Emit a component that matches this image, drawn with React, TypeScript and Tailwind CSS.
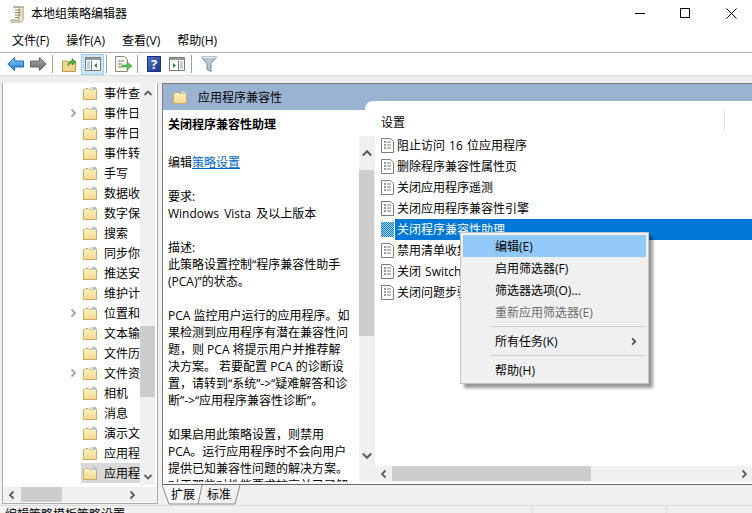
import React from "react";

const font = { fontFamily: '"Open Sans","Noto Sans CJK SC",sans-serif' };

function Folder({ className = "" }: { className?: string }) {
  return (
    <svg width="14" height="13" viewBox="0 0 14 13" className={className + " shrink-0"}>
      <defs>
        <linearGradient id="fg" x1="0" y1="0" x2="0" y2="1">
          <stop offset="0" stopColor="#fdf3c4" />
          <stop offset="1" stopColor="#f3d990" />
        </linearGradient>
      </defs>
      <path d="M.5 2.500h1l1-1h3l1 1h7v10H.5z" fill="url(#fg)" stroke="#c9aa68" />
      <path d="M8.500 .5h4.500v2H8.500z" fill="#fff" stroke="#c9c9c0" />
      <path d="M10 1h2.500v1H10z" fill="#6db3e8" />
    </svg>
  );
}

function Chev({ dir, color = "#5f5f5f", size = 10 }: { dir: "u" | "d" | "l" | "r"; color?: string; size?: number }) {
  const d = { u: "M1.500 7 5 3.500 8.500 7", d: "M1.500 3 5 6.500 8.500 3", l: "M6.500 1.500 3 5l3.500 3.500", r: "M3.500 1.500 7 5 3.500 8.500" }[dir];
  return (
    <svg width={size} height={size} viewBox="0 0 10 10" className="shrink-0">
      <path d={d} fill="none" stroke={color} strokeWidth="1.800" />
    </svg>
  );
}

function PolicyIcon({ selected = false }: { selected?: boolean }) {
  if (selected) {
    return (
      <svg width="13" height="15" viewBox="0 0 13 15" className="shrink-0">
        <defs>
          <pattern id="dith" width="2" height="2" patternUnits="userSpaceOnUse">
            <rect width="2" height="2" fill="#0078d7" />
            <rect width="1" height="1" fill="#b4d6f4" />
            <rect x="1" y="1" width="1" height="1" fill="#b4d6f4" />
          </pattern>
        </defs>
        <rect width="13" height="15" fill="url(#dith)" />
      </svg>
    );
  }
  return (
    <svg width="13" height="15" viewBox="0 0 13 15" className="shrink-0">
      <path d="M.5.500h9l3 3v11H.5z" fill="#fff" stroke="#7c7c7c" />
      <path d="M3 4h2M3 7h2M3 10h2" stroke="#333" strokeWidth="1.200" />
      <path d="M6 4h4M6 7h4M6 10h4" stroke="#808080" />
    </svg>
  );
}

function Toolbar() {
  const Sep = ({ ml }: { ml: string }) => <div className={`w-px h-[18px] bg-[#a0a0a0] ${ml}`} />;
  return (
    <div className="h-[22px] flex items-center bg-white">
      <svg width="17" height="14" viewBox="0 0 17 14" className="ml-[7px]">
        <defs>
          <linearGradient id="bk" x1="0" y1="0" x2="0" y2="1">
            <stop offset="0" stopColor="#8fd6fb" />
            <stop offset="1" stopColor="#1473d0" />
          </linearGradient>
        </defs>
        <path d="M7.500.500.800 7l6.700 6.500V10h9V4h-9z" fill="url(#bk)" stroke="#1f6fb8" />
      </svg>
      <svg width="17" height="14" viewBox="0 0 17 14" className="ml-[6px]">
        <defs>
          <linearGradient id="fw" x1="0" y1="0" x2="0" y2="1">
            <stop offset="0" stopColor="#aaa" />
            <stop offset="1" stopColor="#666" />
          </linearGradient>
        </defs>
        <path d="M9.500.500 16.200 7l-6.700 6.500V10h-9V4h9z" fill="url(#fw)" stroke="#666" />
      </svg>
      <Sep ml="ml-[5px]" />
      <svg width="16" height="16" viewBox="0 0 16 16" className="ml-[9px]">
        <path d="M.5 5h5l1 1h7v9.500H.5z" fill="#f0d68c" stroke="#b89a50" />
        <path d="M6 10c0-4 2-5 4-5V2.500L14 6l-4 3V7c-2 0-3 1-4 3z" fill="#4caf3a" stroke="#2f7f25" strokeWidth=".6" />
      </svg>
      <div className="ml-[3px] w-[23px] h-[21px] bg-[#cce4f7] border border-[#99d1ff] flex items-center justify-center">
        <svg width="16" height="14" viewBox="0 0 16 14">
          <path d="M.5.500h15v13H.5z" fill="#fff" stroke="#7a7a7a" />
          <path d="M1 1h14v2H1z" fill="#9a9a9a" />
          <path d="M6.500 3.500v10" stroke="#7a7a7a" />
          <path d="M2 5h3M2 7h3M2 9h3M2 11h3" stroke="#7aa0c8" />
          <path d="M12 6v5L9 8.500z" fill="#2e8b3a" />
        </svg>
      </div>
      <Sep ml="ml-[2px]" />
      <svg width="17" height="16" viewBox="0 0 17 16" className="ml-[8px]">
        <path d="M.5.500h9l3 3v12H.5z" fill="#fdfbf0" stroke="#8c8c80" />
        <path d="M3 5h6M3 8h4M3 11h4" stroke="#777" />
        <path d="M7 9h5V6l5 4-5 4v-3H7z" fill="#5cc04a" stroke="#3a9030" strokeWidth=".5" />
      </svg>
      <Sep ml="ml-[5px]" />
      <div className="ml-[9px] w-[14px] h-[16px] bg-gradient-to-br from-[#4f74cc] to-[#1d3a8c] border border-[#16307a] flex items-center justify-center text-white text-[13px] font-bold leading-none">?</div>
      <svg width="16" height="14" viewBox="0 0 16 14" className="ml-[8px]">
        <path d="M.5.500h15v13H.5z" fill="#fff" stroke="#7a7a7a" />
        <path d="M1 1h14v2H1z" fill="#9a9a9a" />
        <path d="M9.500 3.500v10" stroke="#7a7a7a" />
        <path d="M11 5h3M11 7h3M11 9h3M11 11h3" stroke="#7aa0c8" />
        <path d="M4 6v5l3-2.500z" fill="#2e8b3a" />
      </svg>
      <Sep ml="ml-[6px]" />
      <svg width="16" height="16" viewBox="0 0 16 16" className="ml-[9px]">
        <path d="M.5 1h15l-5.500 6.500v8L6 13.500v-6z" fill="#b8c8d6" stroke="#6f8496" />
        <path d="M1 1.500h14" stroke="#e6edf3" />
      </svg>
    </div>
  );
}

const treeRows: [string, boolean][] = [
  ["事件查", false], ["事件日", true], ["事件日", false], ["事件转", false], ["手写", false],
  ["数据收", false], ["数字保", false], ["搜索", false], ["同步你", false], ["推送安", false],
  ["维护计", false], ["位置和", true], ["文本输", false], ["文件历", false], ["文件资", true],
  ["相机", false], ["消息", false], ["演示文", false], ["应用程", false], ["应用程", false],
];

function Tree() {
  return (
    <div className="w-[156px] h-[421px] bg-white border-r border-b border-l border-[#a8a8a8] flex flex-col shrink-0">
      <div className="flex h-[402px]">
        <div className="w-[137px] overflow-hidden">
          {treeRows.map(([name, chev], i) => (
            <div key={i} className="h-5 flex items-center">
              <div className="ml-[65px] w-[13px] h-5 flex items-center">
                {chev && <Chev dir="r" color="#a6a6a6" />}
              </div>
              <div className={`w-[59px] h-5 flex items-center pl-[2px] ${i === 19 ? "bg-[#d9d9d9]" : ""}`}>
                <Folder />
                <span className="ml-[7px] whitespace-nowrap">{name}</span>
              </div>
            </div>
          ))}
        </div>
        <div className="w-[15px] bg-[#f0f0f0] flex flex-col items-center">
          <div className="h-[20px] flex items-center"><Chev dir="u" /></div>
          <div className="h-[223px]" />
          <div className="h-[71px] w-full bg-[#cdcdcd]" />
          <div className="flex-1" />
          <div className="h-[16px] flex items-center"><Chev dir="d" /></div>
        </div>
      </div>
      <div className="h-[2px]" />
      <div className="h-[15px] bg-[#f0f0f0] flex items-center">
        <div className="w-[18px] flex justify-center"><Chev dir="l" /></div>
        <div className="w-[41px] h-full bg-[#cdcdcd]" />
        <div className="flex-1" />
        <div className="w-[38px] flex justify-center pr-[13px]"><Chev dir="r" /></div>
      </div>
    </div>
  );
}

const L = ({ children = "\u00a0" }: { children?: React.ReactNode }) => <div className="h-[17px] whitespace-nowrap">{children}</div>;

function Description() {
  return (
    <div className="w-[196px] shrink-0 overflow-hidden pl-[5px] pt-[6px] leading-[17px]">
      <div className="h-[21px] font-bold whitespace-nowrap">关闭程序兼容性助理</div>
      <div className="h-[17px]" />
      <L>编辑<span className="text-[#0066cc] underline">策略设置</span></L>
      <L />
      <L>要求:</L>
      <L><span className="[word-spacing:2px]">Windows Vista </span>及以上版本</L>
      <L />
      <L>描述:</L>
      <L>此策略设置控制“程序兼容性助手</L>
      <L>(PCA)”的状态。</L>
      <L />
      <L>PCA 监控用户运行的应用程序。如</L>
      <L>果检测到应用程序有潜在兼容性问</L>
      <L>题，则 PCA 将提示用户并推荐解</L>
      <L>决方案。 若要配置 PCA 的诊断设</L>
      <L>置，请转到“系统”-&gt;“疑难解答和诊</L>
      <L>断”-&gt;“应用程序兼容性诊断”。</L>
      <L />
      <L>如果启用此策略设置，则禁用</L>
      <L>PCA。运行应用程序时不会向用户</L>
      <L>提供已知兼容性问题的解决方案。</L>
      <L>对于那些对性能要求较高并已了解</L>
    </div>
  );
}

const listRows = [
  "阻止访问 16 位应用程序",
  "删除程序兼容性属性页",
  "关闭应用程序遥测",
  "关闭应用程序兼容性引擎",
  "关闭程序兼容性助理",
  "禁用清单收集",
  "关闭 Switchback",
  "关闭问题步骤记录器",
];

function SettingsList() {
  return (
    <div className="flex-1 min-w-0 flex flex-col h-[372px]">
      <div className="h-[25px] flex items-center relative">
        <span className="ml-[6px] mt-[-1px]">设置</span>
        <div className="absolute left-[349px] top-[1px] h-[20px] w-px bg-[#e5e5e5]" />
      </div>
      <div className="flex-1 pt-0">
        {listRows.map((t, i) => (
          <div key={t} className="h-[21px] flex items-center pl-[6px]">
            <PolicyIcon selected={i === 4} />
            <div className={`ml-[1px] h-[21px] flex-1 flex items-center pl-[2px] whitespace-pre [word-spacing:1px] ${i === 4 ? "bg-[#0078d7] text-white" : ""}`}>{t}</div>
          </div>
        ))}
      </div>
      <div className="h-[16px] bg-[#f0f0f0] flex items-center">
        <div className="w-[17px] flex justify-center"><Chev dir="l" /></div>
        <div className="w-[199px] h-[15px] self-start bg-[#cdcdcd]" />
        <div className="flex-1" />
        <div className="w-[17px] flex justify-center"><Chev dir="r" /></div>
      </div>
    </div>
  );
}

function ContextMenu() {
  const Item = ({ children, hi, dis }: { children: React.ReactNode; hi?: boolean; dis?: boolean }) => (
    <div className={`h-[22px] flex items-center pl-[32px] whitespace-nowrap ${hi ? "bg-[#91c9f7]" : ""} ${dis ? "text-[#6d6d6d]" : ""}`}>{children}</div>
  );
  const Sep = () => <div className="ml-[28px] my-[3px] h-[2px] border-t border-[#d0d0d0]" />;
  return (
    <div className="absolute left-[460px] top-[232px] w-[189px] h-[152px] bg-[#f0f0f0] border border-[#c4c4c4] pt-[2px] px-[2px] shadow-[4px_4px_3px_rgba(0,0,0,0.4)]">
      <Item hi>编辑(E)</Item>
      <Item>启用筛选器(F)</Item>
      <Item>筛选器选项(O)...</Item>
      <Item dis>重新应用筛选器(E)</Item>
      <Sep />
      <div className="h-[22px] flex items-center pl-[32px] justify-between pr-[8px] mt-[-1px]">
        <span>所有任务(K)</span>
        <Chev dir="r" size={9} color="#444" />
      </div>
      <Sep />
      <div className="mt-[-1px]">
        <Item>帮助(H)</Item>
      </div>
    </div>
  );
}

export default function App() {
  return (
    <div className="relative w-[752px] h-[513px] overflow-hidden bg-white text-[12px] leading-[17px] text-black" style={font}>
      {/* title bar */}
      <div className="h-[27px] flex items-center">
        <svg width="15" height="17" viewBox="0 0 15 17" className="ml-[10px] mt-[1px]">
          <path d="M3 1h11c-1 1-1 2-1 3v9c0 2-1 3-3 3H2c-1 0-2-1-1-2h8V3c0-1 1-2 2-2z" fill="#f4ecd0" stroke="#a09878" />
          <path d="M5 4h6M5 6.500h6M5 9h6M5 11.500h4" stroke="#8a8266" />
        </svg>
        <span className="ml-[6px] text-[12px]">本地组策略编辑器</span>
        <div className="flex-1" />
        <svg width="11" height="11" viewBox="0 0 11 11" className="mr-[34px]"><path d="M0 5.500h10" stroke="#000" /></svg>
        <svg width="11" height="11" viewBox="0 0 11 11" className="mr-[35px]"><rect x=".5" y=".5" width="9" height="9" fill="none" stroke="#000" /></svg>
        <svg width="11" height="11" viewBox="0 0 11 11" className="mr-[15px]"><path d="M.5.500l10 10M10.500.500l-10 10" stroke="#000" fill="none" /></svg>
      </div>
      {/* menu */}
      <div className="h-[26px] flex items-center pl-[12px] gap-[17px] border-b border-[#b0b0b0] pt-[2px]">
        <span>文件(F)</span>
        <span>操作(A)</span>
        <span>查看(V)</span>
        <span>帮助(H)</span>
      </div>
      <Toolbar />
      <div className="h-[8px] bg-[#eeeeee] border-t border-[#dcdcdc]" />
      {/* main */}
      <div className="flex h-[422px] bg-[#f0f0f0] pl-[2px]">
        <Tree />
        <div className="w-[4px] shrink-0" />
        <div className="flex-1 min-w-0 flex flex-col border-l border-t border-[#7d7d7d] bg-white h-[402px]">
          <div className="h-[26px] bg-[#9ab3d2] flex items-center pl-[10px] relative shrink-0">
            <Folder />
            <span className="ml-[11px] text-[12px]">应用程序兼容性</span>
            <div className="absolute left-[202px] right-0 top-[17px] bottom-0 bg-white rounded-tl-[8px]" />
          </div>
          <div className="flex h-[372px]">
            <Description />
            <div className="w-[16px] shrink-0 h-[372px] bg-white flex flex-col">
              <div className="h-[26px]" />
              <div className="w-[16px] flex-1 bg-[#f0f0f0] flex flex-col items-center">
                <div className="h-[34px] flex items-center justify-center"><Chev dir="u" size={12} /></div>
                <div className="h-[166px] w-[15px] self-start bg-[#cdcdcd]" />
                <div className="flex-1" />
                <div className="h-[46px] pt-[14px] flex justify-center"><Chev dir="d" size={12} /></div>
              </div>
            </div>
            <SettingsList />
          </div>
          <div className="h-[2px] shrink-0" />
        </div>
      </div>
      {/* Tabs overlay over gray band */}
      <div className="absolute left-[163px] top-[484px] right-0 h-[21px] border-t border-[#6a6a6a] bg-[#f0f0f0] flex items-start">
        <svg width="82" height="21" viewBox="0 0 82 21" className="absolute left-[-2px] top-0">
          <path d="M1 0l7 19h29l4-19" fill="#f8f8f8" stroke="#8a8a8a" />
          <path d="M37 19h37l5-19" fill="none" stroke="#8a8a8a" />
        </svg>
        <span className="relative ml-[8px] mt-[1px] w-[24px]">扩展</span>
        <span className="relative ml-[12px] mt-[1px]">标准</span>
      </div>
      {/* status bar */}
      <div className="absolute left-0 right-0 top-[505px] h-[8px] border-t border-[#dcdcdc] bg-[#f0f0f0] flex">
        <div className="w-[533px] pl-[5px] border-r border-[#dcdcdc] whitespace-nowrap">编辑策略模板策略设置</div>
        <div className="w-[134px] border-r border-[#dcdcdc]" />
      </div>
      <ContextMenu />
    </div>
  );
}
